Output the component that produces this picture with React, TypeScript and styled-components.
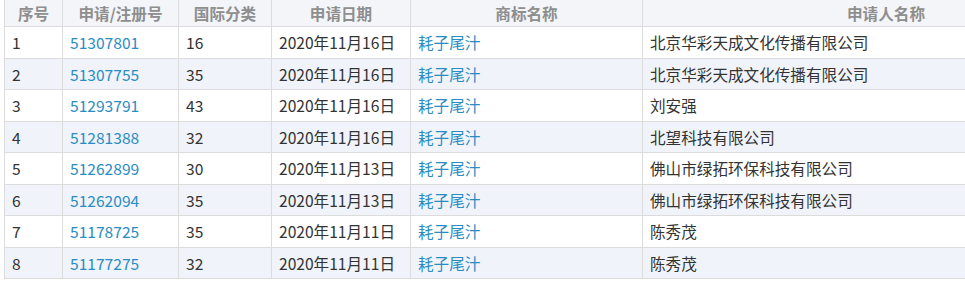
import styled, { createGlobalStyle } from 'styled-components';

const GlobalStyle = createGlobalStyle`
  html, body {
    margin: 0;
    padding: 0;
    background: #fff;
  }
  body {
    font-family: "Microsoft YaHei", "Noto Sans CJK SC", "Noto Sans", sans-serif;
  }
`;

const rows = [
  { no: 1, reg: '51307801', cls: '16', date: '2020年11月16日', applicant: '北京华彩天成文化传播有限公司' },
  { no: 2, reg: '51307755', cls: '35', date: '2020年11月16日', applicant: '北京华彩天成文化传播有限公司' },
  { no: 3, reg: '51293791', cls: '43', date: '2020年11月16日', applicant: '刘安强' },
  { no: 4, reg: '51281388', cls: '32', date: '2020年11月16日', applicant: '北望科技有限公司' },
  { no: 5, reg: '51262899', cls: '30', date: '2020年11月13日', applicant: '佛山市绿拓环保科技有限公司' },
  { no: 6, reg: '51262094', cls: '35', date: '2020年11月13日', applicant: '佛山市绿拓环保科技有限公司' },
  { no: 7, reg: '51178725', cls: '35', date: '2020年11月11日', applicant: '陈秀茂' },
  { no: 8, reg: '51177275', cls: '32', date: '2020年11月11日', applicant: '陈秀茂' },
];

export default function App() {
  return (
    <>
      <GlobalStyle />
      <Page>
        <Viewport>
          <Table>
            <colgroup>
              <col style={{ width: 58 }} />
              <col style={{ width: 116 }} />
              <col style={{ width: 93 }} />
              <col style={{ width: 139 }} />
              <col style={{ width: 232 }} />
              <col />
            </colgroup>
            <thead>
              <tr>
                <Th>序号</Th>
                <Th>申请/注册号</Th>
                <Th>国际分类</Th>
                <Th>申请日期</Th>
                <Th>商标名称</Th>
                <Th>申请人名称</Th>
              </tr>
            </thead>
            <tbody>
              {rows.map((r) => (
                <Row key={r.no} striped={r.no % 2 === 0}>
                  <Td>{r.no}</Td>
                  <Td>
                    <Link>{r.reg}</Link>
                  </Td>
                  <Td>{r.cls}</Td>
                  <Td>{r.date}</Td>
                  <Td>
                    <Link>耗子尾汁</Link>
                  </Td>
                  <Td>{r.applicant}</Td>
                </Row>
              ))}
            </tbody>
          </Table>
        </Viewport>
      </Page>
    </>
  );
}

const Page = styled.div`
  padding-left: 4px;
`;

// the table is wider than the frame; it is clipped on the right
const Viewport = styled.div`
  width: 961px;
  overflow: hidden;
`;

const Table = styled.table`
  width: 1126px;
  border-collapse: collapse;
  table-layout: fixed;
  font-size: 15.6px;
  color: #333;
`;

const Th = styled.th`
  height: 26px;
  padding: 0 8px;
  background: #f3f5f8;
  color: #8e8e8e;
  font-weight: bold;
  text-align: center;
  border: 1px solid #dcdcdc;
  border-top: none;
  white-space: nowrap;
`;

const Row = styled.tr<{ striped: boolean }>`
  background: ${(p) => (p.striped ? '#f0f4fa' : '#fff')};
`;

const Td = styled.td`
  height: 30.5px;
  padding: 0 7px;
  border: 1px solid #dcdcdc;
  text-align: left;
  white-space: nowrap;
`;

const Link = styled.a`
  color: #2b8cc4;
  text-decoration: none;
  cursor: pointer;
`;
